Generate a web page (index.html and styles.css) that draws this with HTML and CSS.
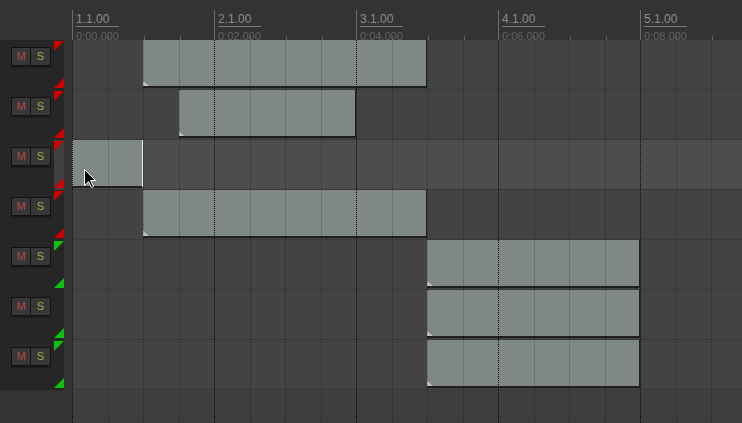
FILE: index.html
```html
<!DOCTYPE html>
<html>
<head>
<meta charset="utf-8">
<title>Arrange</title>
<link rel="stylesheet" href="styles.css">
</head>
<body>
<div class="app">
  <div class="ruler">
    <div class="ruler-gap"></div>
    <div class="bar"><span class="bar-label">1.1.00</span><span class="bar-time">0:00.000</span></div>
    <div class="bar"><span class="bar-label">2.1.00</span><span class="bar-time">0:02.000</span></div>
    <div class="bar"><span class="bar-label">3.1.00</span><span class="bar-time">0:04.000</span></div>
    <div class="bar"><span class="bar-label">4.1.00</span><span class="bar-time">0:06.000</span></div>
    <div class="bar"><span class="bar-label">5.1.00</span><span class="bar-time">0:08.000</span></div>
  </div>
  <div class="main">
    <div class="tcp">
      <div class="track-head">
        <div class="ms"><span class="btn m">M</span><span class="btn s">S</span></div>
        <div class="strip"><i class="tri top red"></i><i class="tri bot red"></i></div>
      </div>
      <div class="track-head">
        <div class="ms"><span class="btn m">M</span><span class="btn s">S</span></div>
        <div class="strip"><i class="tri top red"></i><i class="tri bot red"></i></div>
      </div>
      <div class="track-head selected">
        <div class="ms"><span class="btn m">M</span><span class="btn s">S</span></div>
        <div class="strip"><i class="tri top red"></i><i class="tri bot red"></i></div>
      </div>
      <div class="track-head">
        <div class="ms"><span class="btn m">M</span><span class="btn s">S</span></div>
        <div class="strip"><i class="tri top red"></i><i class="tri bot red"></i></div>
      </div>
      <div class="track-head">
        <div class="ms"><span class="btn m">M</span><span class="btn s">S</span></div>
        <div class="strip"><i class="tri top green"></i><i class="tri bot green"></i></div>
      </div>
      <div class="track-head">
        <div class="ms"><span class="btn m">M</span><span class="btn s">S</span></div>
        <div class="strip"><i class="tri top none"></i><i class="tri bot green"></i></div>
      </div>
      <div class="track-head">
        <div class="ms"><span class="btn m">M</span><span class="btn s">S</span></div>
        <div class="strip"><i class="tri top green"></i><i class="tri bot green"></i></div>
      </div>
    </div>
    <div class="arrange">
      <div class="lane"><div class="item fade" style="grid-column: 3 / 11"></div></div>
      <div class="lane"><div class="item fade" style="grid-column: 4 / 9"></div></div>
      <div class="lane selected"><div class="item edge" style="grid-column: 1 / 3"></div></div>
      <div class="lane"><div class="item fade" style="grid-column: 3 / 11"></div></div>
      <div class="lane"><div class="item fade" style="grid-column: 11 / 17"></div></div>
      <div class="lane"><div class="item fade" style="grid-column: 11 / 17"></div></div>
      <div class="lane"><div class="item fade" style="grid-column: 11 / 17"></div></div>
      <div class="lane-empty"></div>
      <div class="grid-overlay">
        <span class="beat barline"></span><span class="beat"></span><span class="beat"></span><span class="beat"></span>
        <span class="beat barline"></span><span class="beat"></span><span class="beat"></span><span class="beat"></span>
        <span class="beat barline"></span><span class="beat"></span><span class="beat"></span><span class="beat"></span>
        <span class="beat barline"></span><span class="beat"></span><span class="beat"></span><span class="beat"></span>
        <span class="beat barline"></span><span class="beat"></span><span class="beat"></span><span class="beat"></span>
      </div>
      <svg class="cursor" width="13" height="20" viewBox="0 0 13 20">
        <path d="M0.5 0.5 L0.5 16.5 L4.5 12.5 L7.5 18.5 L9.5 17.5 L6.5 11.5 L11.5 11.5 Z" fill="#000" stroke="#fff" stroke-width="1"/>
      </svg>
    </div>
  </div>
</div>
</body>
</html>
```
FILE: styles.css
```css
* { box-sizing: border-box; }
html, body {
  margin: 0;
  padding: 0;
  background: #333333;
  width: 742px;
  height: 423px;
  overflow: hidden;
}
.app {
  width: 742px;
  height: 423px;
  display: flex;
  flex-direction: column;
  font-family: "Liberation Sans", Arial, sans-serif;
}
.ruler {
  height: 40px;
  display: flex;
  flex: none;
  overflow: hidden;
  background: #333333;
}
.ruler-gap { width: 72px; flex: none; }
.bar {
  width: 142px;
  flex: none;
  margin-top: 10px;
  height: 30px;
  border-left: 1px solid #6b6b6b;
  display: flex;
  flex-direction: column;
  overflow: hidden;
  background-image: repeating-linear-gradient(to right, transparent 0 35px, #626262 35px 36px, transparent 36px 35.5px);
  background-size: 100% 4px;
  background-position: left bottom;
  background-repeat: no-repeat;
}
.bar-label {
  display: block;
  width: 43px;
  margin-left: 3px;
  padding-top: 3px;
  font-size: 12px;
  line-height: 13px;
  color: #8c8c8c;
  border-bottom: 1px solid #7a7a7a;
}
.bar-time {
  display: block;
  margin-left: 3px;
  margin-top: 3px;
  font-size: 11px;
  line-height: 13px;
  color: #626262;
}
.main {
  flex: 1;
  display: flex;
  min-height: 0;
}
.tcp {
  width: 72px;
  flex: none;
  display: flex;
  flex-direction: column;
}
.track-head {
  width: 64px;
  height: 50px;
  display: flex;
  background: #262626;
}
.ms {
  width: 54px;
  flex: none;
  padding: 7px 0 0 11px;
  display: flex;
  align-items: flex-start;
}
.btn {
  width: 20px;
  height: 19px;
  background: #373737;
  border: 1px solid #121212;
  box-shadow: 0 2px 0 #1c1c1c;
  font-size: 11px;
  line-height: 17px;
  text-align: center;
}
.btn.s { border-left: none; width: 20px; }
.btn.m { color: #b04a4a; }
.btn.s { color: #a6a64e; }
.strip {
  width: 10px;
  flex: none;
  display: flex;
  flex-direction: column;
  justify-content: space-between;
  padding: 1px 0 2px;
}
.track-head.selected .strip { background: #404040; }
.tri { display: block; width: 10px; height: 10px; }
.tri.top { clip-path: polygon(0 0, 100% 0, 0 100%); }
.tri.bot { clip-path: polygon(100% 0, 100% 100%, 0 100%); }
.tri.red { background: #d00000; }
.tri.green { background: #10c010; }
.tri.none { background: transparent; }
.arrange {
  flex: 1;
  position: relative;
  display: flex;
  flex-direction: column;
  overflow: hidden;
}
.lane {
  height: 50px;
  flex: none;
  display: grid;
  grid-template-columns: repeat(19, 35.5px);
  grid-template-rows: 48px;
  background: #434343;
  border-bottom: 1px solid #393939;
}
.lane.selected { background: #4d4d4d; }
.lane-empty {
  flex: 1;
  background: #3e3e3e;
}
.item {
  position: relative;
  background: #7f8886;
  border-bottom: 2px solid #1e1e1e;
  border-right: 1px solid #1e1e1e;
}
.item.edge { border-right-color: #f0f0f0; }
.item.fade::after {
  content: "";
  position: absolute;
  left: 0;
  bottom: 0;
  width: 6px;
  height: 5px;
  background: #c4c4c4;
  clip-path: polygon(0 0, 100% 100%, 0 100%);
}
.grid-overlay {
  position: absolute;
  left: 0;
  top: 0;
  bottom: 0;
  display: flex;
  pointer-events: none;
}
.beat {
  width: 35.5px;
  flex: none;
  border-left: 1px dotted rgba(0, 0, 0, 0.32);
}
.beat.barline { border-left-color: #080808; }
.cursor {
  position: absolute;
  left: 12px;
  top: 129px;
}
```
